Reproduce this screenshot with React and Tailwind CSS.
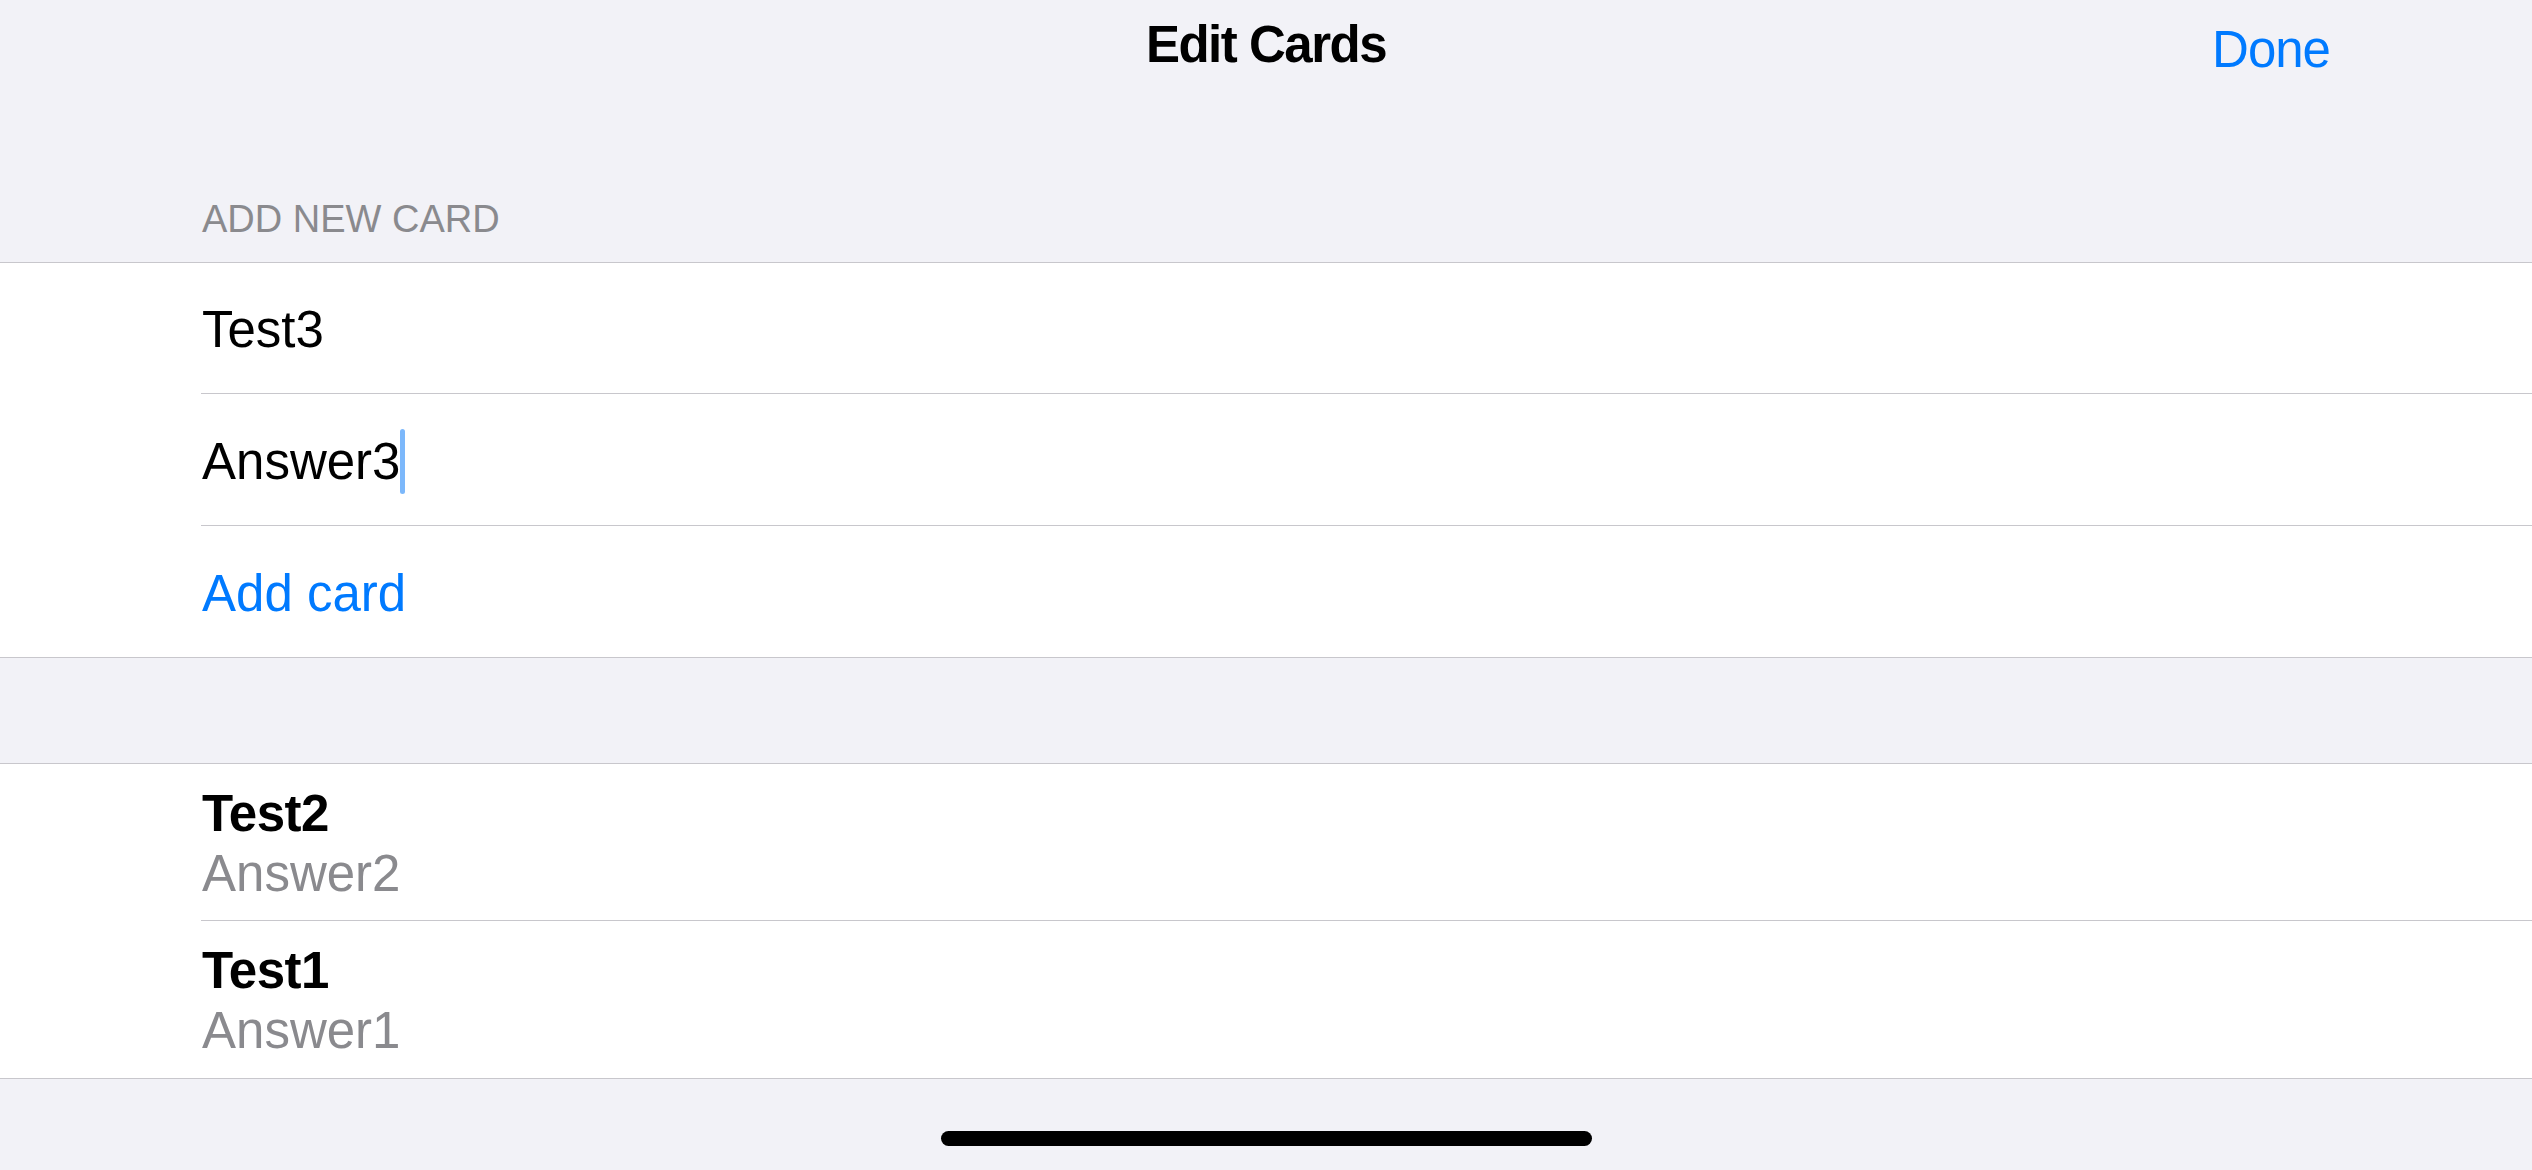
import React from "react";

const font = { fontFamily: '"Liberation Sans", Arial, sans-serif' };

function NewCardRow({ children, height, last }) {
  return (
    <div className="pl-[201px]">
      <div
        className={`${height} flex items-center pt-[3px] ${
          last ? "" : "border-b border-[#c8c7cc]"
        }`}
      >
        {children}
      </div>
    </div>
  );
}

function CardRow({ question, answer, last }) {
  return (
    <div className="pl-[201px]">
      <div
        className={`h-[157px] flex flex-col justify-center pl-px pt-[2px] ${
          last ? "" : "border-b border-[#c8c7cc]"
        }`}
      >
        <div className="text-[51px] leading-none font-bold text-black tracking-[-0.5px]">
          {question}
        </div>
        <div className="mt-[9px] text-[51px] leading-none text-[#8a8a8e]">
          {answer}
        </div>
      </div>
    </div>
  );
}

export default function App() {
  const cards = [
    { question: "Test2", answer: "Answer2" },
    { question: "Test1", answer: "Answer1" },
  ];

  return (
    <div
      className="w-[2532px] h-[1170px] bg-[#f2f2f7] flex flex-col overflow-hidden"
      style={font}
    >
      {/* Nav bar */}
      <div className="h-[200px] grid grid-cols-3 px-[202px]">
        <div />
        <div className="pt-[19px] text-center text-[51px] leading-none font-bold text-black tracking-[-1.5px]">
          Edit Cards
        </div>
        <div className="pt-[24px] text-right text-[51px] leading-none text-[#007aff] tracking-[-1px]">
          Done
        </div>
      </div>

      {/* Section header */}
      <div className="pl-[202px] pb-[24px] text-[38px] leading-none text-[#8a8a8e]">
        ADD NEW CARD
      </div>

      {/* New card form */}
      <div className="bg-white border-y border-[#c8c7cc]">
        <NewCardRow height="h-[131px]">
          <span className="pl-px text-[51px] leading-none text-black">Test3</span>
        </NewCardRow>
        <NewCardRow height="h-[132px]">
          <span className="pl-px flex items-center text-[51px] leading-none text-black">
            Answer3
            <span className="inline-block w-[5px] h-[65px] rounded-full bg-[#7cb8fb]" />
          </span>
        </NewCardRow>
        <NewCardRow height="h-[131px]" last>
          <span className="pl-px text-[51px] leading-none text-[#007aff]">Add card</span>
        </NewCardRow>
      </div>

      <div className="h-[105px]" />

      {/* Existing cards */}
      <div className="bg-white border-y border-[#c8c7cc]">
        {cards.map((c, i) => (
          <CardRow
            key={c.question}
            question={c.question}
            answer={c.answer}
            last={i === cards.length - 1}
          />
        ))}
      </div>

      {/* Home indicator */}
      <div className="flex justify-center pt-[52px]">
        <div className="w-[651px] h-[15px] rounded-full bg-black" />
      </div>
    </div>
  );
}
